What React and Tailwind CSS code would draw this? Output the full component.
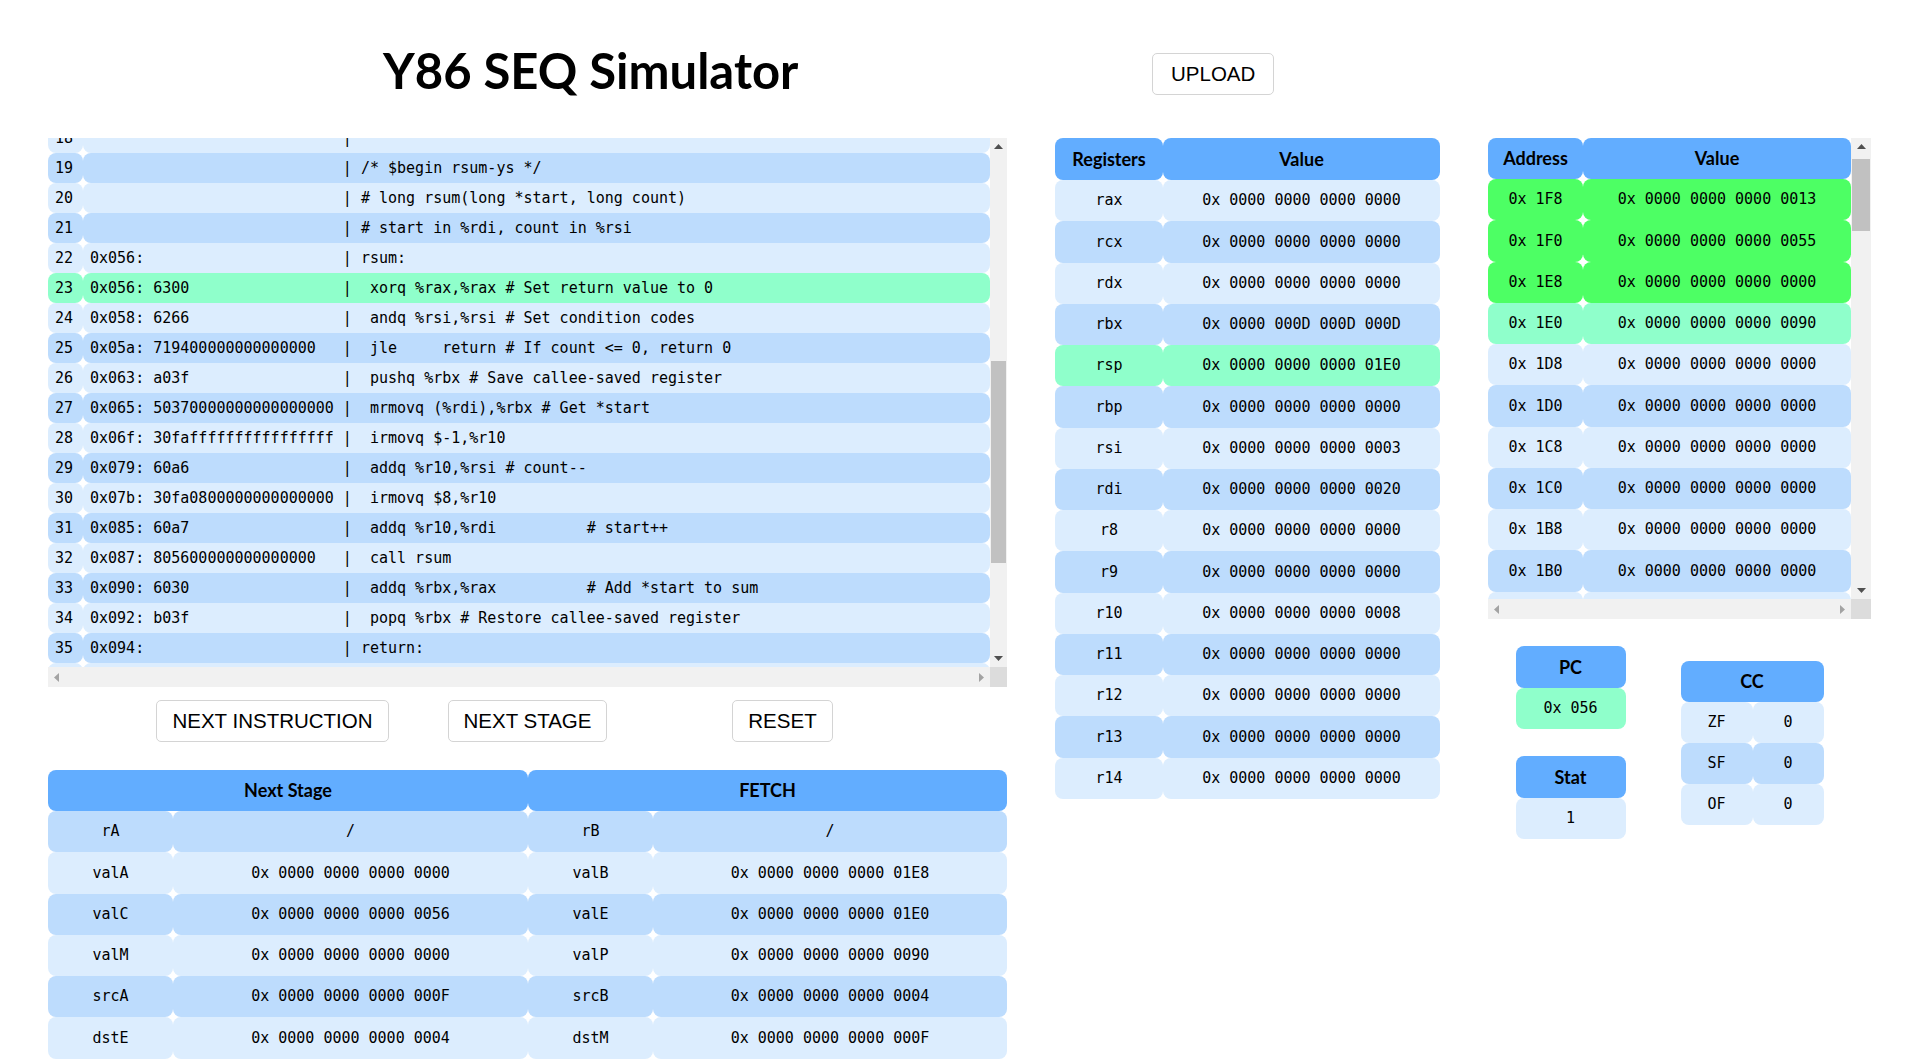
import { useLayoutEffect, useRef } from "react";

const mono = "font-['DejaVu_Sans_Mono',monospace] text-[15px]";
const head = "font-['Lato',sans-serif] font-bold text-[18px]";

const LIGHT = "bg-[#dcedfe]";
const DARK = "bg-[#bddcfd]";
const MINT = "bg-[#8fffcb]";
const GREEN = "bg-[#4dff64]";
const BLUE = "bg-[#62adff]";
const ROW = "h-[41.25px]";

const code = [
    "0x000:                      | .pos 0",
    "0x000: 30f40002000000000000 |  irmovq stack, %rsp # Set up stack pointer",
    "0x00a: 803800000000000000   |  call main # Execute main program",
    "0x013: 00                   |  halt # Terminate program",
    "                            |",
    "                            | # Array of 4 elements",
    "0x018:                      |  .align 8",
    "0x018:                      | array:",
    "0x018: 0d000d000d000000     |  .quad 0x000d000d000d",
    "0x020: c000c000c0000000     |  .quad 0x00c000c000c0",
    "0x028: 000b000b000b0000     |  .quad 0x0b000b000b00",
    "0x030: 00a000a000a00000     |  .quad 0xa000a000a000",
    "                            |",
    "0x038: 30f71800000000000000 | main: irmovq array,%rdi",
    "0x042: 30f60400000000000000 |  irmovq $4,%rsi",
    "0x04c: 805600000000000000   |  call rsum # rsum(array, 4)",
    "0x055: 90                   |  ret",
    "                            |",
    "                            | /* $begin rsum-ys */",
    "                            | # long rsum(long *start, long count)",
    "                            | # start in %rdi, count in %rsi",
    "0x056:                      | rsum:",
    "0x056: 6300                 |  xorq %rax,%rax # Set return value to 0",
    "0x058: 6266                 |  andq %rsi,%rsi # Set condition codes",
    "0x05a: 719400000000000000   |  jle     return # If count <= 0, return 0",
    "0x063: a03f                 |  pushq %rbx # Save callee-saved register",
    "0x065: 50370000000000000000 |  mrmovq (%rdi),%rbx # Get *start",
    "0x06f: 30faffffffffffffffff |  irmovq $-1,%r10",
    "0x079: 60a6                 |  addq %r10,%rsi # count--",
    "0x07b: 30fa0800000000000000 |  irmovq $8,%r10",
    "0x085: 60a7                 |  addq %r10,%rdi          # start++",
    "0x087: 805600000000000000   |  call rsum",
    "0x090: 6030                 |  addq %rbx,%rax          # Add *start to sum",
    "0x092: b03f                 |  popq %rbx # Restore callee-saved register",
    "0x094:                      | return:",
    "0x094: 90                   |  ret",
    "                            | /* $end rsum-ys */",
    "                            |",
    "                            | # The stack starts here and grows to lower addresses",
    "0x200:                      |  .pos 0x200",
    "0x200:                      | stack:",
    "                            |",
];

const registers = [
    ["rax", "0000 0000 0000 0000"],
    ["rcx", "0000 0000 0000 0000"],
    ["rdx", "0000 0000 0000 0000"],
    ["rbx", "0000 000D 000D 000D"],
    ["rsp", "0000 0000 0000 01E0"],
    ["rbp", "0000 0000 0000 0000"],
    ["rsi", "0000 0000 0000 0003"],
    ["rdi", "0000 0000 0000 0020"],
    ["r8", "0000 0000 0000 0000"],
    ["r9", "0000 0000 0000 0000"],
    ["r10", "0000 0000 0000 0008"],
    ["r11", "0000 0000 0000 0000"],
    ["r12", "0000 0000 0000 0000"],
    ["r13", "0000 0000 0000 0000"],
    ["r14", "0000 0000 0000 0000"],
];

const memValues = { 0x1f8: "0013", 0x1f0: "0055", 0x1e8: "0000", 0x1e0: "0090" };
const memory = Array.from({ length: 64 }, (_, i) => {
    const addr = 0x1f8 - i * 8;
    return {
        addr: addr.toString(16).toUpperCase().padStart(3, "0"),
        value: "0000 0000 0000 " + (memValues[addr] || "0000"),
        color: addr >= 0x1e8 ? GREEN : addr === 0x1e0 ? MINT : i % 2 ? DARK : LIGHT,
    };
});

const stage = [
    ["rA", "/", "rB", "/"],
    ["valA", "0x 0000 0000 0000 0000", "valB", "0x 0000 0000 0000 01E8"],
    ["valC", "0x 0000 0000 0000 0056", "valE", "0x 0000 0000 0000 01E0"],
    ["valM", "0x 0000 0000 0000 0000", "valP", "0x 0000 0000 0000 0090"],
    ["srcA", "0x 0000 0000 0000 000F", "srcB", "0x 0000 0000 0000 0004"],
    ["dstE", "0x 0000 0000 0000 0004", "dstM", "0x 0000 0000 0000 000F"],
];

const btn = "h-[42px] px-[15px] bg-white border border-[#d4d4d4] rounded-[5px] font-['Liberation_Sans',Arial,sans-serif] text-[20.5px] text-black";

function Cell({ className, children }) {
    return (
        <div className={`rounded-lg flex items-center justify-center ${className}`}>
            {children}
        </div>
    );
}

// little scrollbar arrow triangles
function Arrow({ dir, color }) {
    const paths = {
        up: "M0 5L4.5 0L9 5Z",
        down: "M0 0L4.5 5L9 0Z",
        left: "M5 0L0 4.5L5 9Z",
        right: "M0 0L5 4.5L0 9Z",
    };
    const vertical = dir === "up" || dir === "down";
    return (
        <svg width={vertical ? 9 : 5} height={vertical ? 5 : 9} fill={color}>
            <path d={paths[dir]} />
        </svg>
    );
}

// scroll box with a drawn classic scrollbar (the headless browser hides native ones)
function ScrollBox({ boxClass, barClass, thumbClass, innerRef, children }) {
    return (
        <div className={`flex flex-col ${boxClass}`}>
            <div className="flex flex-1 min-h-0">
                <div ref={innerRef} className="flex-1 min-w-0 overflow-hidden">
                    {children}
                </div>
                <div className={`flex flex-col bg-[#f1f1f1] ${barClass}`}>
                    <div className="h-[17px] flex items-center justify-center">
                        <Arrow dir="up" color="#505050" />
                    </div>
                    <div className="flex-1 px-[1px]">
                        <div className={`bg-[#c1c1c1] ${thumbClass}`} />
                    </div>
                    <div className="h-[17px] flex items-center justify-center">
                        <Arrow dir="down" color="#505050" />
                    </div>
                </div>
            </div>
            <div className="flex h-[20px]">
                <div className="flex-1 bg-[#f1f1f1] flex items-center justify-between px-[6px]">
                    <Arrow dir="left" color="#a3a3a3" />
                    <Arrow dir="right" color="#a3a3a3" />
                </div>
                <div className={`bg-[#dcdcdc] ${barClass}`} />
            </div>
        </div>
    );
}

export default function App() {
    const codeRef = useRef(null);

    // keep the program view on the current instruction
    useLayoutEffect(() => {
        if (codeRef.current) codeRef.current.scrollTop = 525;
    }, []);

    return (
        <div className="h-[1059px] overflow-hidden bg-white px-[48px] text-black">
            {/* header */}
            <div className="flex h-[138px]">
                <div className="w-[959px] pl-[335px] pt-[40px]">
                    <h1 className="font-['Lato',sans-serif] font-bold text-[49px] leading-[60px]">
                        Y86 SEQ Simulator
                    </h1>
                </div>
                <div className="ml-[48px] pl-[97px] pt-[53px]">
                    <button className={`${btn} h-[41px] px-[18px]`}>UPLOAD</button>
                </div>
            </div>

            <div className="flex gap-[48px]">
                {/* left column */}
                <div className="w-[959px]">
                    <ScrollBox
                        boxClass="h-[549px]"
                        barClass="w-[17px]"
                        thumbClass="mt-[206px] h-[202px]"
                        innerRef={codeRef}
                    >
                        {code.map((line, i) => {
                            const n = i + 1;
                            const color = n === 23 ? MINT : n % 2 ? DARK : LIGHT;
                            return (
                                <div key={n} className={`flex h-[30px] ${mono}`}>
                                    <div className={`w-[35px] shrink-0 rounded-lg pl-[7px] flex items-center ${color}`}>
                                        {n}
                                    </div>
                                    <div className={`flex-1 rounded-lg pl-[7px] flex items-center whitespace-pre ${color}`}>
                                        {line}
                                    </div>
                                </div>
                            );
                        })}
                    </ScrollBox>

                    <div className="w-[765px] mx-auto mt-[13px] grid grid-cols-3 justify-items-center">
                        <button className={btn}>NEXT INSTRUCTION</button>
                        <button className={btn}>NEXT STAGE</button>
                        <button className={btn}>RESET</button>
                    </div>

                    <div className={`mt-[28px] grid grid-cols-[125px_355px_125px_1fr] ${mono}`}>
                        <Cell className={`col-span-2 h-[41px] ${BLUE} ${head}`}>Next Stage</Cell>
                        <Cell className={`col-span-2 h-[41px] ${BLUE} ${head}`}>FETCH</Cell>
                        {stage.map((row, i) =>
                            row.map((v, j) => (
                                <Cell key={`${i}-${j}`} className={`${ROW} ${i % 2 ? LIGHT : DARK}`}>
                                    {v}
                                </Cell>
                            ))
                        )}
                    </div>
                </div>

                {/* registers */}
                <div className={`w-[385px] self-start grid grid-cols-[108px_1fr] ${mono}`}>
                    <Cell className={`h-[42px] ${BLUE} ${head}`}>Registers</Cell>
                    <Cell className={`h-[42px] ${BLUE} ${head}`}>Value</Cell>
                    {registers.map(([name, val], i) => {
                        const color = name === "rsp" ? MINT : i % 2 ? DARK : LIGHT;
                        return [
                            <Cell key={name} className={`${ROW} ${color}`}>{name}</Cell>,
                            <Cell key={name + "v"} className={`${ROW} ${color}`}>0x {val}</Cell>,
                        ];
                    })}
                </div>

                {/* memory + pc / stat / cc */}
                <div className="w-[383px]">
                    <ScrollBox boxClass="h-[481px]" barClass="w-[20px]" thumbClass="mt-[4px] h-[72px]">
                        <div className={`w-[363px] grid grid-cols-[95px_1fr] ${mono}`}>
                            <Cell className={`h-[41px] ${BLUE} ${head}`}>Address</Cell>
                            <Cell className={`h-[41px] ${BLUE} ${head}`}>Value</Cell>
                            {memory.map((m) => [
                                <Cell key={m.addr} className={`${ROW} ${m.color}`}>0x {m.addr}</Cell>,
                                <Cell key={m.addr + "v"} className={`${ROW} ${m.color}`}>0x {m.value}</Cell>,
                            ])}
                        </div>
                    </ScrollBox>

                    <div className={`mt-[27px] w-[363px] flex justify-around items-center ${mono}`}>
                        <div className="w-[110px]">
                            <Cell className={`h-[42px] ${BLUE} ${head}`}>PC</Cell>
                            <Cell className={`h-[41px] ${MINT}`}>0x 056</Cell>
                            <Cell className={`mt-[27px] h-[42px] ${BLUE} ${head}`}>Stat</Cell>
                            <Cell className={`h-[41px] ${LIGHT}`}>1</Cell>
                        </div>
                        <div className="w-[143px] grid grid-cols-[72px_1fr]">
                            <Cell className={`col-span-2 h-[41px] ${BLUE} ${head}`}>CC</Cell>
                            {["ZF", "SF", "OF"].map((f, i) => [
                                <Cell key={f} className={`h-[41px] ${i % 2 ? DARK : LIGHT}`}>{f}</Cell>,
                                <Cell key={f + "v"} className={`h-[41px] ${i % 2 ? DARK : LIGHT}`}>0</Cell>,
                            ])}
                        </div>
                    </div>
                </div>
            </div>
        </div>
    );
}
